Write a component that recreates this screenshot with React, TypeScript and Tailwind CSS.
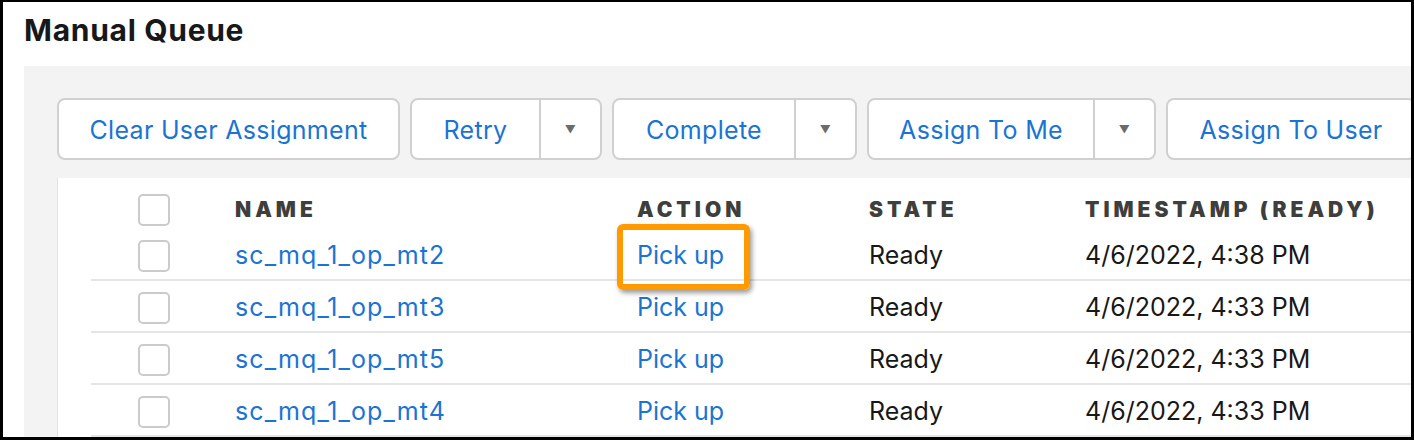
import React from "react";

const ROWS = [
  { name: "sc_mq_1_op_mt2", time: "4/6/2022, 4:38 PM" },
  { name: "sc_mq_1_op_mt3", time: "4/6/2022, 4:33 PM" },
  { name: "sc_mq_1_op_mt5", time: "4/6/2022, 4:33 PM" },
  { name: "sc_mq_1_op_mt4", time: "4/6/2022, 4:33 PM" },
];

function Checkbox() {
  return <div className="w-[32px] h-[32px] rounded-[5px] border-2 border-[#cbcbcb] bg-white shrink-0" />;
}

function SplitButton({ label, w }: { label: string; w: string }) {
  return (
    <div className={`${w} flex h-full rounded-[8px] border-2 border-[#d0d0d0] bg-white shrink-0`}>
      <div className="flex-1 flex items-center justify-center pt-[3px]">{label}</div>
      <div className="w-[61px] flex items-center justify-center border-l-2 border-[#d0d0d0] text-[11px] text-[#6b6b6b]">▼</div>
    </div>
  );
}

export default function App() {
  return (
    <div
      className="w-[1414px] h-[440px] overflow-hidden bg-white border-[3px] border-t-2 border-black"
      style={{ fontFamily: "Inter, 'Liberation Sans', sans-serif" }}
    >
      <h1 className="pl-[21px] pt-[6px] h-[64px] text-[30px] font-bold text-[#181818] tracking-[0.7px]">Manual Queue</h1>
      <div className="ml-[21px] bg-[#f3f3f3] pl-[33px] pt-[32px] h-full">
        {/* toolbar */}
        <div className="flex gap-[10px] h-[62px] text-[25px] tracking-[0.3px] text-[#1b74d2]">
          <div className="w-[343px] h-full rounded-[8px] border-2 border-[#d0d0d0] bg-white flex items-center justify-center pt-[3px] shrink-0">
            Clear User Assignment
          </div>
          <SplitButton label="Retry" w="w-[192px]" />
          <SplitButton label="Complete" w="w-[245px]" />
          <SplitButton label="Assign To Me" w="w-[289px]" />
          <div className="w-[250px] h-full rounded-[8px] border-2 border-[#d0d0d0] bg-white flex items-center justify-center pt-[3px] shrink-0">
            Assign To User
          </div>
        </div>

        {/* table */}
        <div className="relative mt-[18px] bg-white border-l border-[#e2e2e2] h-full">
          <div className="flex items-center h-[51px] pt-[12px] pl-[80px]">
            <Checkbox />
            <div className="flex text-[21px] font-black tracking-[4px] text-[#3e3e3c]">
              <div className="w-[65px]" />
              <div className="w-[402px]">NAME</div>
              <div className="w-[232px]">ACTION</div>
              <div className="w-[216px]">STATE</div>
              <div className="whitespace-nowrap">TIMESTAMP (READY)</div>
            </div>
          </div>
          {ROWS.map((r) => (
            <div key={r.name} className="ml-[33px] h-[52px] border-b-2 border-[#e5e5e5] flex items-center pl-[47px] text-[25px] pt-[3px]">
              <Checkbox />
              <div className="w-[65px]" />
              <div className="w-[402px] text-[#1b74d2] tracking-[1.1px]">{r.name}</div>
              <div className="w-[232px] text-[#1b74d2]">Pick up</div>
              <div className="w-[216px] text-[#181818]">Ready</div>
              <div className="whitespace-nowrap text-[#181818]">{r.time}</div>
            </div>
          ))}
          <div className="absolute left-[559px] top-[46px] w-[133px] h-[66px] rounded-[6px] border-[6px] border-[#ff9a00] shadow-[2px_3px_5px_rgba(0,0,0,0.4)]" />
        </div>
      </div>
    </div>
  );
}
